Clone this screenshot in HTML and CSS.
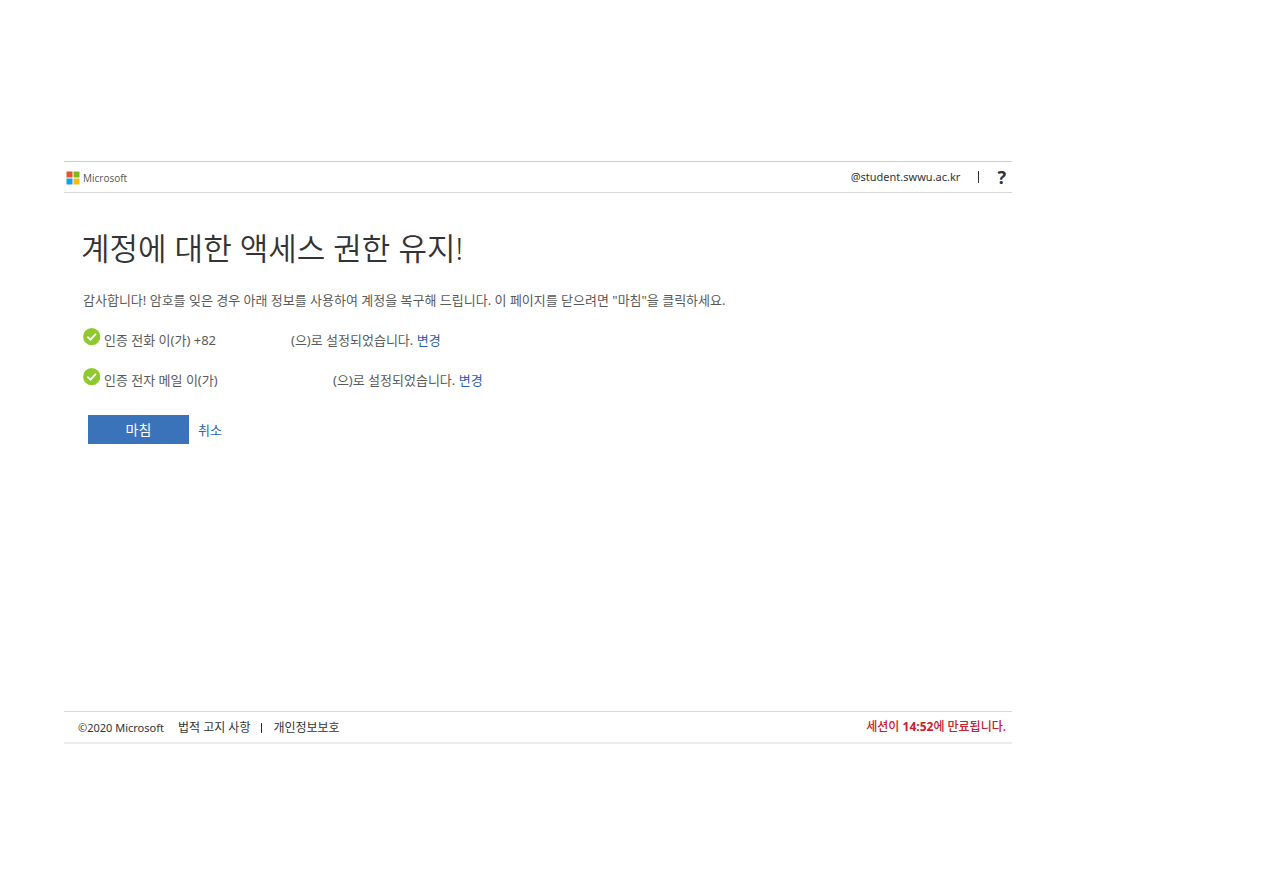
FILE: index.html
```html
<!DOCTYPE html>
<html lang="ko">
<head>
<meta charset="utf-8">
<meta name="viewport" content="width=device-width, initial-scale=1">
<title>계정에 대한 액세스 권한 유지</title>
<link rel="stylesheet" href="styles.css">
</head>
<body>
<div class="shell">
  <header class="topbar">
    <a class="brand" href="#">
      <svg class="brand-mark" viewBox="0 0 14 14" aria-hidden="true">
        <path fill="#e2562b" d="M0.5 0.5h6v6h-6z"/>
        <path fill="#7dbb1c" d="M7.5 0.5h6v6h-6z"/>
        <path fill="#12a0e8" d="M0.5 7.5h6v6h-6z"/>
        <path fill="#fbb90b" d="M7.5 7.5h6v6h-6z"/>
      </svg>
      <span class="brand-name">Microsoft</span>
    </a>
    <div class="account">
      <span>@student.swwu.ac.kr</span>
      <span class="divider"></span>
      <a class="help" href="#">?</a>
    </div>
  </header>
  <main class="content">
    <h1 class="title">계정에 대한 액세스 권한 유지!</h1>
    <p class="intro">감사합니다! 암호를 잊은 경우 아래 정보를 사용하여 계정을 복구해 드립니다. 이 페이지를 닫으려면 "마침"을 클릭하세요.</p>
    <ul class="methods">
      <li class="method">
        <svg class="check" viewBox="0 0 18 18" aria-hidden="true"><circle cx="8.7" cy="8.7" r="8.6" fill="#8fc92e"/><path d="M4.4 8.6l3.1 3.1 5.4-5.8" fill="none" stroke="#fff" stroke-width="1.7"/></svg>
        <span class="phone">인증 전화 이(가) +82</span>
        <span>(으)로 설정되었습니다. <a class="link" href="#">변경</a></span>
      </li>
      <li class="method">
        <svg class="check" viewBox="0 0 18 18" aria-hidden="true"><circle cx="8.7" cy="8.7" r="8.6" fill="#8fc92e"/><path d="M4.4 8.6l3.1 3.1 5.4-5.8" fill="none" stroke="#fff" stroke-width="1.7"/></svg>
        <span class="email">인증 전자 메일 이(가)</span>
        <span>(으)로 설정되었습니다. <a class="link" href="#">변경</a></span>
      </li>
    </ul>
    <div class="actions">
      <button class="finish" type="button">마침</button>
      <a class="link" href="#">취소</a>
    </div>
  </main>
  <footer class="footer">
    <div class="legal">
      <span class="copyright">©2020 Microsoft</span>
      <a href="#">법적 고지 사항</a>
      <span class="divider small"></span>
      <a href="#">개인정보보호</a>
    </div>
    <span class="session">세션이 <b>14:52</b>에 만료됩니다.</span>
  </footer>
</div>
</body>
</html>
```
FILE: styles.css
```css
* { box-sizing: border-box; }
body {
  margin: 0;
  background: #fff;
  color: #5a5a5a;
  font: 13px/20px "Noto Sans", "Noto Sans CJK KR", sans-serif;
}
a { color: inherit; text-decoration: none; }
.shell { padding: 161px 250px 0 64px; }
.topbar {
  display: flex;
  align-items: center;
  justify-content: space-between;
  height: 32px;
  padding: 0 6px 0 2px;
  border-top: 1px solid #c9cddb;
  border-bottom: 1px solid #d5d7da;
}
.brand { display: flex; align-items: center; gap: 3px; padding-top: 2px; }
.brand-mark { width: 14px; height: 14px; }
.brand-name { color: #555; font: 10px/14px "Open Sans", sans-serif; }
.account {
  display: flex;
  align-items: center;
  color: #333;
  font-size: 11px;
}
.divider { width: 1px; height: 12px; margin: 0 18px; background: #333; }
.help { font-size: 18px; font-weight: 700; }
.content { min-height: 518px; padding: 33px 17px; }
.title {
  margin: 0;
  color: #333;
  font-size: 31px;
  line-height: 44px;
  font-weight: 350;
}
.intro { margin: 20px 2px 19px; }
.methods {
  display: grid;
  gap: 19px;
  margin: 0 2px;
  padding: 0;
  list-style: none;
}
.method { display: flex; align-items: flex-end; padding-top: 1px; }
.check { align-self: flex-start; width: 18px; height: 18px; margin: -2px 3px 0 0; }
.phone { width: 187px; }
.email { width: 229px; }
.link { color: #2c5fb0; }
.actions { display: flex; align-items: center; gap: 9px; margin: 25px 7px; }
.finish {
  width: 101px;
  height: 29px;
  border: 0;
  background: #3a73ba;
  color: #fff;
  font: inherit;
  font-size: 14px;
}
.footer {
  display: flex;
  align-items: center;
  justify-content: space-between;
  height: 33px;
  padding: 0 6px 0 14px;
  border-top: 1px solid #d9d9d9;
  border-bottom: 2px solid #ececec;
  color: #333;
  font-size: 12px;
}
.legal { display: flex; align-items: center; padding-top: 2px; }
.copyright { margin-right: 14px; font-size: 11px; }
.small { height: 10px; margin: 0 11px; }
.session { color: #c8202f; font-weight: 500; }
```
